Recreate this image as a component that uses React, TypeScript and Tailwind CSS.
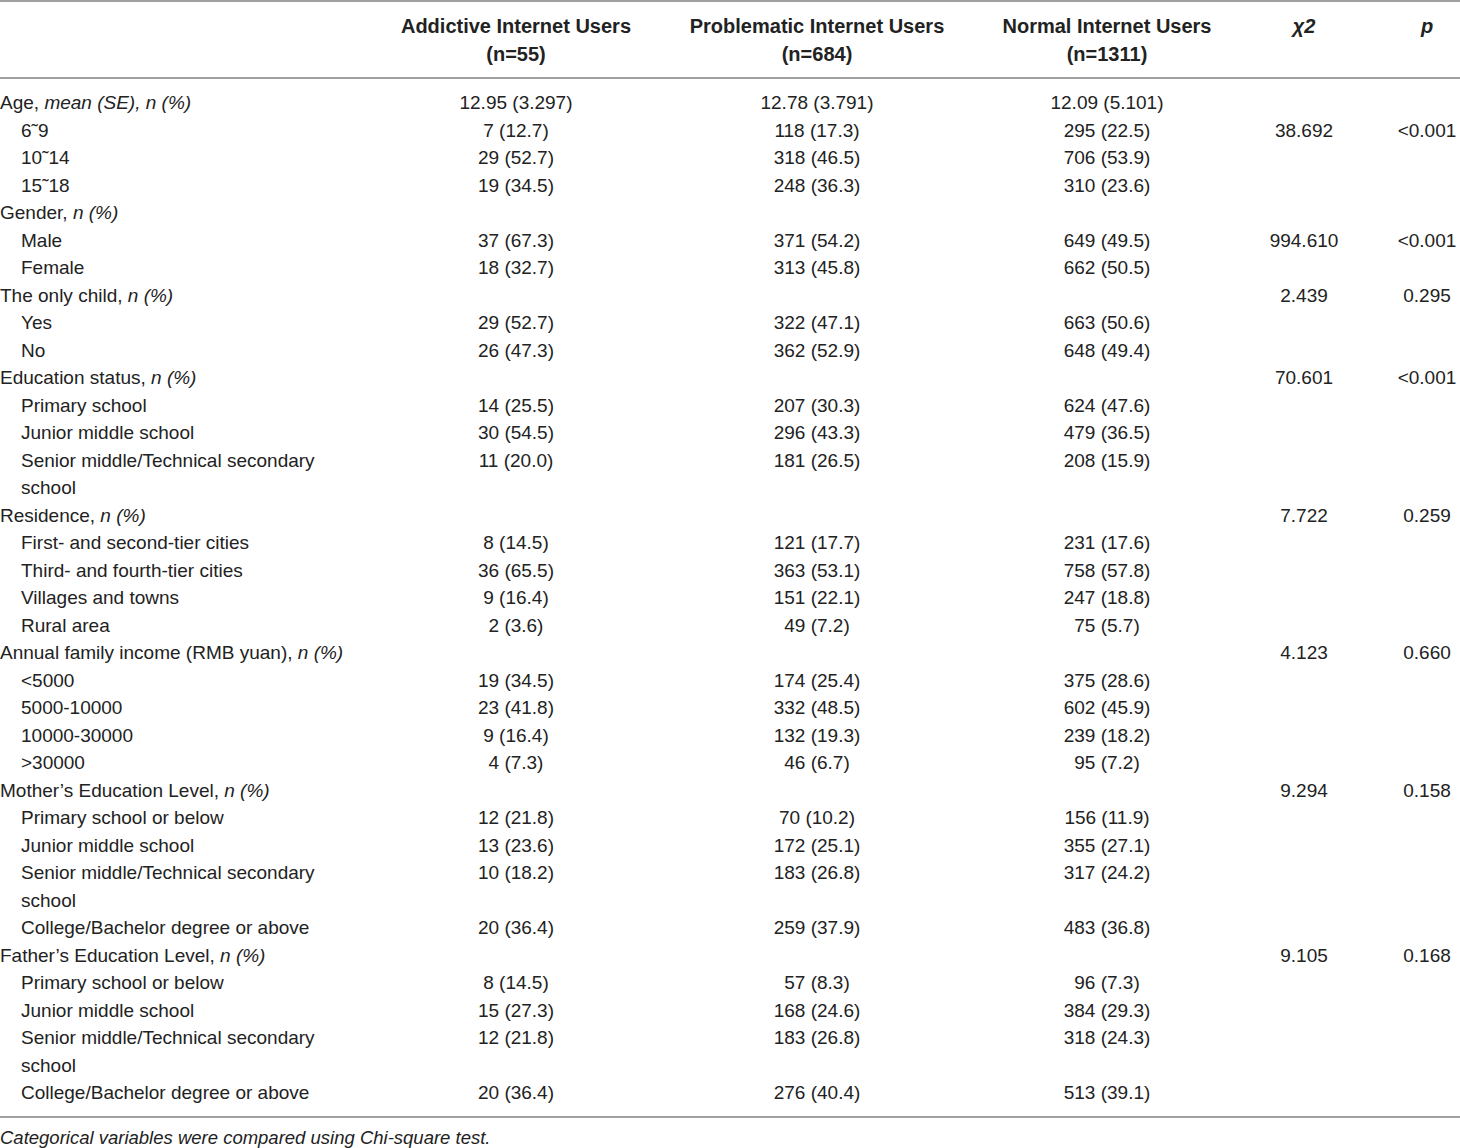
import { Fragment } from 'react';

type Row = {
  label: React.ReactNode;
  sub?: boolean;
  a?: string;
  b?: string;
  c?: string;
  chi?: string;
  p?: string;
};

const rows: Row[] = [
  { label: <>Age, <i>mean (SE), n (%)</i></>, a: '12.95 (3.297)', b: '12.78 (3.791)', c: '12.09 (5.101)' },
  { label: '6˜9', sub: true, a: '7 (12.7)', b: '118 (17.3)', c: '295 (22.5)', chi: '38.692', p: '<0.001' },
  { label: '10˜14', sub: true, a: '29 (52.7)', b: '318 (46.5)', c: '706 (53.9)' },
  { label: '15˜18', sub: true, a: '19 (34.5)', b: '248 (36.3)', c: '310 (23.6)' },
  { label: <>Gender, <i>n (%)</i></> },
  { label: 'Male', sub: true, a: '37 (67.3)', b: '371 (54.2)', c: '649 (49.5)', chi: '994.610', p: '<0.001' },
  { label: 'Female', sub: true, a: '18 (32.7)', b: '313 (45.8)', c: '662 (50.5)' },
  { label: <>The only child, <i>n (%)</i></>, chi: '2.439', p: '0.295' },
  { label: 'Yes', sub: true, a: '29 (52.7)', b: '322 (47.1)', c: '663 (50.6)' },
  { label: 'No', sub: true, a: '26 (47.3)', b: '362 (52.9)', c: '648 (49.4)' },
  { label: <>Education status, <i>n (%)</i></>, chi: '70.601', p: '<0.001' },
  { label: 'Primary school', sub: true, a: '14 (25.5)', b: '207 (30.3)', c: '624 (47.6)' },
  { label: 'Junior middle school', sub: true, a: '30 (54.5)', b: '296 (43.3)', c: '479 (36.5)' },
  { label: <>Senior middle/Technical secondary<br />school</>, sub: true, a: '11 (20.0)', b: '181 (26.5)', c: '208 (15.9)' },
  { label: <>Residence, <i>n (%)</i></>, chi: '7.722', p: '0.259' },
  { label: 'First- and second-tier cities', sub: true, a: '8 (14.5)', b: '121 (17.7)', c: '231 (17.6)' },
  { label: 'Third- and fourth-tier cities', sub: true, a: '36 (65.5)', b: '363 (53.1)', c: '758 (57.8)' },
  { label: 'Villages and towns', sub: true, a: '9 (16.4)', b: '151 (22.1)', c: '247 (18.8)' },
  { label: 'Rural area', sub: true, a: '2 (3.6)', b: '49 (7.2)', c: '75 (5.7)' },
  { label: <>Annual family income (RMB yuan), <i>n (%)</i></>, chi: '4.123', p: '0.660' },
  { label: '<5000', sub: true, a: '19 (34.5)', b: '174 (25.4)', c: '375 (28.6)' },
  { label: '5000-10000', sub: true, a: '23 (41.8)', b: '332 (48.5)', c: '602 (45.9)' },
  { label: '10000-30000', sub: true, a: '9 (16.4)', b: '132 (19.3)', c: '239 (18.2)' },
  { label: '>30000', sub: true, a: '4 (7.3)', b: '46 (6.7)', c: '95 (7.2)' },
  { label: <>Mother’s Education Level, <i>n (%)</i></>, chi: '9.294', p: '0.158' },
  { label: 'Primary school or below', sub: true, a: '12 (21.8)', b: '70 (10.2)', c: '156 (11.9)' },
  { label: 'Junior middle school', sub: true, a: '13 (23.6)', b: '172 (25.1)', c: '355 (27.1)' },
  { label: <>Senior middle/Technical secondary<br />school</>, sub: true, a: '10 (18.2)', b: '183 (26.8)', c: '317 (24.2)' },
  { label: 'College/Bachelor degree or above', sub: true, a: '20 (36.4)', b: '259 (37.9)', c: '483 (36.8)' },
  { label: <>Father’s Education Level, <i>n (%)</i></>, chi: '9.105', p: '0.168' },
  { label: 'Primary school or below', sub: true, a: '8 (14.5)', b: '57 (8.3)', c: '96 (7.3)' },
  { label: 'Junior middle school', sub: true, a: '15 (27.3)', b: '168 (24.6)', c: '384 (29.3)' },
  { label: <>Senior middle/Technical secondary<br />school</>, sub: true, a: '12 (21.8)', b: '183 (26.8)', c: '318 (24.3)' },
  { label: 'College/Bachelor degree or above', sub: true, a: '20 (36.4)', b: '276 (40.4)', c: '513 (39.1)' },
];

const grid = 'grid grid-cols-[398px_236px_366px_214px_180px_66px]';

export default function App() {
  return (
    <div className="w-[1460px] bg-white text-[#222] text-[19px] leading-[27.5px] font-['Liberation_Sans',Arial,sans-serif]">
      {/* Header */}
      <div className={`${grid} border-t-2 border-b-2 border-[#a0a0a0] pt-[11px] pb-[9px] font-bold text-[20px]`}>
        <div />
        <div className="text-center whitespace-nowrap">Addictive Internet Users<br />(n=55)</div>
        <div className="text-center whitespace-nowrap">Problematic Internet Users<br />(n=684)</div>
        <div className="text-center whitespace-nowrap">Normal Internet Users<br />(n=1311)</div>
        <div className="text-center italic">χ2</div>
        <div className="text-center italic">p</div>
      </div>

      {/* Body */}
      <div className={`${grid} border-b-2 border-[#a0a0a0] pt-[10px] pb-[9px]`}>
        {rows.map((r, i) => (
          <Fragment key={i}>
            <div className={`whitespace-nowrap ${r.sub ? 'pl-[21px]' : ''}`}>{r.label}</div>
            <div className="text-center">{r.a}</div>
            <div className="text-center">{r.b}</div>
            <div className="text-center">{r.c}</div>
            <div className="text-center">{r.chi}</div>
            <div className="text-center whitespace-nowrap">{r.p}</div>
          </Fragment>
        ))}
      </div>

      <p className="italic text-[18.5px] pt-[6px]">Categorical variables were compared using Chi-square test.</p>
    </div>
  );
}
